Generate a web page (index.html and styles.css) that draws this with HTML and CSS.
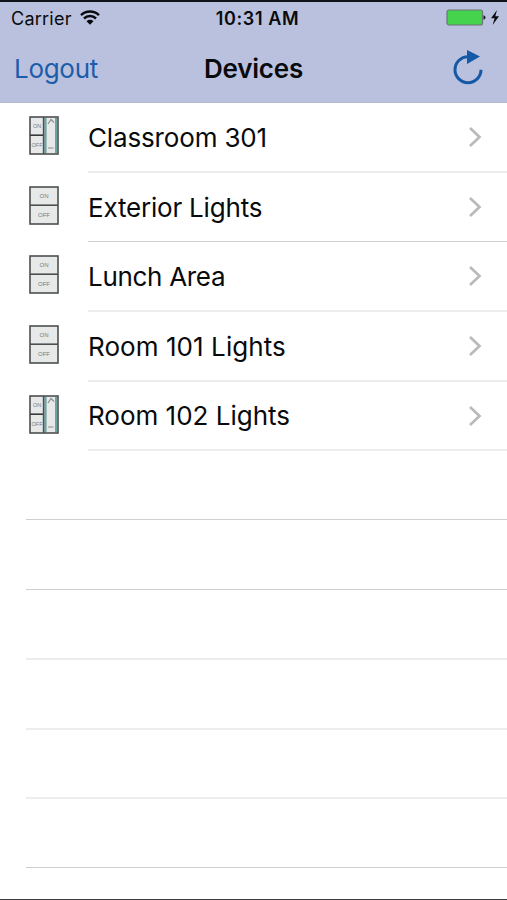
FILE: index.html
```html
<!DOCTYPE html>
<html lang="en">
<head>
<meta charset="utf-8">
<title>Devices</title>
<link rel="stylesheet" href="styles.css">
</head>
<body>
<svg class="defs" width="0" height="0">
  <symbol id="chevron" viewBox="0 0 14 22"><path d="M2 2l9.500 9L2 20" fill="none" stroke="#bababd" stroke-width="2.700"/></symbol>
  <symbol id="onoff" viewBox="0 0 30 39">
    <rect x="1" y="1" width="28" height="37" fill="#e7e9e9" stroke="#4c4f50" stroke-width="1.600"/>
    <path d="M1 19.200h28" stroke="#4c4f50" stroke-width="1.600"/>
  </symbol>
  <symbol id="dimmer" viewBox="0 0 30 39">
    <rect x="1" y="1" width="28" height="37" fill="#e7e9e9" stroke="#4c4f50" stroke-width="1.600"/>
    <path d="M1 19.200h14" stroke="#34393a" stroke-width="1.600"/>
    <path d="M14.700 1v37" stroke="#465253" stroke-width="1.800"/>
    <path d="M16.600 2v35M27 2v35" stroke="#6fa3a2" stroke-width="2"/>
    <path d="M19 8l3-4.500 3 3M19 32h5.500" fill="none" stroke="#8a9090" stroke-width="1.200"/>
  </symbol>
</svg>
<div class="screen">
  <header class="top">
    <div class="status">
      <div class="left"><span class="carrier">Carrier</span>
        <svg class="wifi" width="20" height="15" viewBox="0 0 20 15"><path d="M1 5.200a13 13 0 0 1 18 0M4 8.500a8.700 8.700 0 0 1 12 0" fill="none" stroke="#080a10" stroke-width="2.500"/><path d="M6.500 11.200a5 5 0 0 1 7 0L10 14.700z" fill="#080a10"/></svg>
      </div>
      <span class="time">10:31 AM</span>
      <svg class="battery" width="54" height="18" viewBox="0 0 54 18"><rect x="1" y="2" width="35.500" height="15" rx="2" fill="#45d34e" stroke="#6c7379" stroke-width="1.200"/><path d="M37.500 7.200q2 .2 2 2.300t-2 2.300z" fill="#15191d"/><path d="M51 2l-6 8.200h3.600L46.600 17l6.400-8.800h-3.700z" fill="#090b10"/></svg>
    </div>
    <nav class="bar">
      <span class="logout">Logout</span>
      <h1>Devices</h1>
      <svg class="refresh" width="32" height="36" viewBox="0 0 32 36"><path d="M16 6.700A13 13 0 1 0 29 19.700" fill="none" stroke="#1458a6" stroke-width="3"/><path d="M15 0l13 6.500L15 14z" fill="#1458a6"/></svg>
    </nav>
  </header>
  <main>
    <div class="row soft tall"><svg class="device"><use href="#dimmer"/><text x="8" y="12" class="key small">ON</text><text x="8" y="31" class="key small">OFF</text></svg><div class="cell"><span class="n1">Classroom 301</span><svg class="chev"><use href="#chevron"/></svg></div></div>
    <div class="row"><svg class="device"><use href="#onoff"/><text x="15" y="12" class="key">ON</text><text x="15" y="31" class="key">OFF</text></svg><div class="cell"><span class="n2">Exterior Lights</span><svg class="chev"><use href="#chevron"/></svg></div></div>
    <div class="row soft tall"><svg class="device"><use href="#onoff"/><text x="15" y="12" class="key">ON</text><text x="15" y="31" class="key">OFF</text></svg><div class="cell"><span class="n3">Lunch Area</span><svg class="chev"><use href="#chevron"/></svg></div></div>
    <div class="row soft tall"><svg class="device"><use href="#onoff"/><text x="15" y="12" class="key">ON</text><text x="15" y="31" class="key">OFF</text></svg><div class="cell"><span class="n4">Room 101 Lights</span><svg class="chev"><use href="#chevron"/></svg></div></div>
    <div class="row soft"><svg class="device"><use href="#dimmer"/><text x="8" y="12" class="key small">ON</text><text x="8" y="31" class="key small">OFF</text></svg><div class="cell"><span>Room 102 Lights</span><svg class="chev"><use href="#chevron"/></svg></div></div>
    <div class="row empty"><div class="cell"></div></div>
    <div class="row empty tall"><div class="cell"></div></div>
    <div class="row empty tall soft"><div class="cell"></div></div>
    <div class="row empty tall soft"><div class="cell"></div></div>
    <div class="row empty soft"><div class="cell"></div></div>
    <div class="row empty"><div class="cell"></div></div>
  </main>
</div>
</body>
</html>
```

FILE: styles.css
```css
* { box-sizing: border-box; }
body { margin: 0; background: #fff; color: #090a0c; font-family: Inter, "Liberation Sans", sans-serif; }
.defs { position: absolute; }
.screen { height: 900px; overflow: hidden; display: flex; flex-direction: column; border-top: 2px solid #10131c; border-bottom: 1px solid #3c3c3e; }
.top { height: 101px; flex: none; background: #bac1de; border-bottom: 1px solid #b5bac9; }
.status { height: 33px; display: grid; grid-template-columns: 1fr auto 1fr; align-items: center; padding: 0 7px 0 11px; }
.left { display: flex; align-items: center; gap: 8px; }
.carrier { font-size: 18px; letter-spacing: .25px; }
.wifi { margin-top: -3px; }
.time { margin: 0 -2px 0 2px; font-size: 18px; font-weight: 600; letter-spacing: .65px; }
.battery { justify-self: end; margin-top: -3px; }
.bar { height: 67px; display: grid; grid-template-columns: 1fr auto 1fr; align-items: center; padding: 0 23px; }
.logout { margin-left: -9px; color: #1c5dab; font-size: 26px; letter-spacing: -.3px; }
h1 { margin: 0; font-size: 26px; font-weight: 600; letter-spacing: -.2px; }
.refresh { justify-self: end; margin-top: -2px; }
main { flex: 1; }
.row { height: 69px; display: flex; padding-left: 29px; }
.row.tall { height: 70px; }
.device { width: 30px; height: 39px; margin: 13px 29px 0 0; flex: none; }
.cell { flex: 1; display: flex; align-items: center; justify-content: space-between; padding-right: 25px; border-bottom: 1px solid #cfcfd1; font-size: 26px; white-space: nowrap; }
.soft .cell { border-bottom: 2px solid #ededee; }
.empty { padding-left: 26px; }
.n1 { letter-spacing: -.15px; }
.n2 { letter-spacing: -.2px; }
.n3 { letter-spacing: -.3px; }
.n4 { letter-spacing: .07px; }
.chev { width: 14px; height: 22px; }
.key { font: 6px "Liberation Sans", sans-serif; fill: #747a7b; text-anchor: middle; }
.key.small { font-size: 5.500px; }
```
